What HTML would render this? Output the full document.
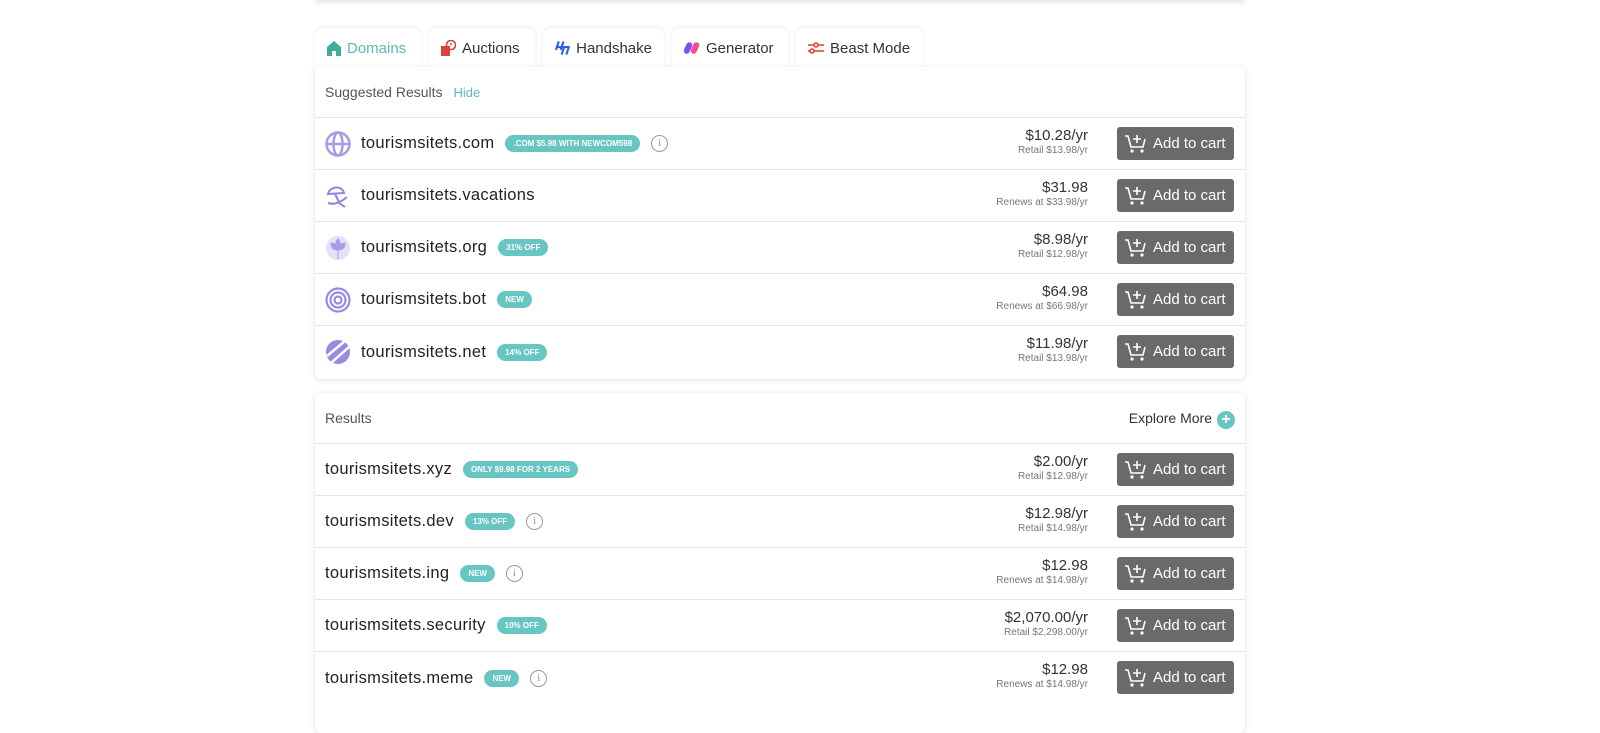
<!DOCTYPE html>
<html><head><style>
*{box-sizing:border-box;margin:0;padding:0}
body{width:1600px;height:718px;background:#fff;font-family:"Liberation Sans",sans-serif;color:#333;position:relative;overflow:hidden}
.top{position:absolute;left:315px;top:-10px;width:930px;height:10px;box-shadow:0 2px 6px rgba(0,0,0,.12)}
.tabs{position:absolute;left:315px;top:28px;display:flex;gap:8px}
.tab{height:40px;background:#fff;border-radius:8px 8px 0 0;box-shadow:0 -1px 5px rgba(0,0,0,.08);display:flex;align-items:center;padding:0 12px;font-size:15px;color:#333;gap:6px;white-space:nowrap}
.tab.act{color:#5fb8b4}
.card{position:absolute;left:315px;width:930px;background:#fff;border-radius:0 6px 6px 6px;box-shadow:0 1px 6px rgba(0,0,0,.12)}
.hdr{height:51px;display:flex;align-items:center;padding:0 10px;font-size:14px;color:#555;border-bottom:1px solid #e5e5e5}
.hdr .hide{color:#5fb8b4;font-size:13px;margin-left:11px}
.row{height:52px;display:flex;align-items:center;padding:0 10px;border-bottom:1px solid #e5e5e5;position:relative}
.row:last-child{border-bottom:none}
.ic{width:26px;height:26px;margin-right:10px}
.dn{font-size:16.5px;color:#222;letter-spacing:.3px}
.badge{background:#67c6c2;color:#fff;font-size:8px;font-weight:bold;border-radius:9px;padding:4px 8px;margin-left:11px;text-transform:uppercase}
.info{width:17px;height:17px;border:1.3px solid #999;border-radius:50%;margin-left:11px;font-size:11px;color:#999;text-align:center;line-height:15px;font-family:"Liberation Serif",serif}
.pr{position:absolute;right:157px;text-align:right;top:9px}
.pr .a{font-size:15px;color:#333}
.pr .b{font-size:10px;color:#777;margin-top:1px}
.btn{position:absolute;left:802px;top:9px;width:117px;height:33px;background:#6a6a6a;border-radius:3px;color:#fff;font-size:15px;display:flex;align-items:center;padding-left:8px;gap:6px}
</style></head><body>
<svg width="0" height="0" style="position:absolute"><symbol id="cart" viewBox="0 0 22 20"><path d="M0 2h3l3 11h12l2-8" fill="none" stroke="#fff" stroke-width="1.6"/><path d="M12 1v8M8 5h8" stroke="#fff" stroke-width="1.6"/><circle cx="7" cy="17" r="1.6" fill="#fff"/><circle cx="17" cy="17" r="1.6" fill="#fff"/></symbol></svg>
<div class="top"></div>
<div class="tabs">
<div class="tab act" style="width:106px"><svg width="14" height="15" viewBox="0 0 14 15"><path d="M7 0L0 6v9h5v-5h4v5h5V6z" fill="#3dae9a"/></svg>Domains</div>
<div class="tab" style="width:106px"><svg width="15" height="16" viewBox="0 0 15 16"><rect x="0" y="6" width="9" height="10" fill="#d9433a"/><circle cx="10" cy="5" r="4.5" fill="none" stroke="#d9433a" stroke-width="1.6"/><path d="M10 3v2.5" stroke="#d9433a" stroke-width="1.4"/></svg>Auctions</div>
<div class="tab" style="width:121px"><svg width="16" height="16" viewBox="0 0 16 16"><path d="M4 1L1 10M9 1L6 10M10 6L7 15M15 6L12 15M2 7h12" stroke="#2f5fe0" stroke-width="2.2" fill="none"/></svg>Handshake</div>
<div class="tab" style="width:116px"><svg width="16" height="14" viewBox="0 0 16 14"><rect x="1" y="1" width="6" height="12" rx="3" transform="rotate(25 4 7)" fill="#7b4ff0"/><rect x="8" y="1" width="6" height="12" rx="3" transform="rotate(25 11 7)" fill="#f0508a"/></svg>Generator</div>
<div class="tab" style="width:127px"><svg width="16" height="14" viewBox="0 0 16 14"><path d="M0 4h6M10 4h6M0 10h2M6 10h10" stroke="#e63a2e" stroke-width="1.6"/><circle cx="8" cy="4" r="2" fill="none" stroke="#e63a2e" stroke-width="1.5"/><circle cx="4" cy="10" r="2" fill="none" stroke="#e63a2e" stroke-width="1.5"/></svg>Beast Mode</div>
</div>

<div class="card" style="top:67px;height:312px">
<div class="hdr">Suggested Results<span class="hide">Hide</span></div>
<div class="row"><svg class="ic" viewBox="0 0 26 26"><circle cx="13" cy="13" r="11.5" fill="none" stroke="#a49ce8" stroke-width="2.5"/><ellipse cx="13" cy="13" rx="4.5" ry="11.5" fill="none" stroke="#a49ce8" stroke-width="2.5"/><path d="M1.5 13h23" stroke="#a49ce8" stroke-width="2.5"/></svg><span class="dn">tourismsitets.com</span><span class="badge">.com $5.98 with NEWCOM598</span><span class="info">i</span>
<div class="pr"><div class="a">$10.28/yr</div><div class="b">Retail $13.98/yr</div></div><div class="btn"><svg width="22" height="20"><use href="#cart"/></svg><span>Add to cart</span></div></div>
<div class="row"><svg class="ic" viewBox="0 0 26 26"><path d="M3 11c2-8 14-9 16-1zM10 11l4 8M3 20c6 2 12 0 19-6M14 20l6 4" fill="none" stroke="#8f86e0" stroke-width="2"/></svg><span class="dn">tourismsitets.vacations</span>
<div class="pr"><div class="a">$31.98</div><div class="b">Renews at $33.98/yr</div></div><div class="btn"><svg width="22" height="20"><use href="#cart"/></svg><span>Add to cart</span></div></div>
<div class="row"><svg class="ic" viewBox="0 0 26 26"><circle cx="13" cy="13" r="12" fill="#e4e1fa"/><path d="M13 4c-3 3-3 6 0 9 3-3 3-6 0-9zM6 8c0 5 3 7 7 7 4 0 7-2 7-7-3 0-5 2-7 4-2-2-4-4-7-4zM13 15v9" fill="#a59de8" stroke="#a59de8"/></svg><span class="dn">tourismsitets.org</span><span class="badge">31% off</span>
<div class="pr"><div class="a">$8.98/yr</div><div class="b">Retail $12.98/yr</div></div><div class="btn"><svg width="22" height="20"><use href="#cart"/></svg><span>Add to cart</span></div></div>
<div class="row"><svg class="ic" viewBox="0 0 26 26"><circle cx="13" cy="13" r="11.5" fill="none" stroke="#948be3" stroke-width="2.2"/><circle cx="13" cy="13" r="7.5" fill="none" stroke="#948be3" stroke-width="2.2"/><circle cx="13" cy="13" r="3.5" fill="none" stroke="#948be3" stroke-width="2.2"/></svg><span class="dn">tourismsitets.bot</span><span class="badge">New</span>
<div class="pr"><div class="a">$64.98</div><div class="b">Renews at $66.98/yr</div></div><div class="btn"><svg width="22" height="20"><use href="#cart"/></svg><span>Add to cart</span></div></div>
<div class="row"><svg class="ic" viewBox="0 0 26 26"><circle cx="13" cy="13" r="12" fill="#948be3"/><path d="M2 17L20 2M6 24L24 8" stroke="#fff" stroke-width="2.5"/></svg><span class="dn">tourismsitets.net</span><span class="badge">14% off</span>
<div class="pr"><div class="a">$11.98/yr</div><div class="b">Retail $13.98/yr</div></div><div class="btn"><svg width="22" height="20"><use href="#cart"/></svg><span>Add to cart</span></div></div>
</div>

<div class="card" style="top:393px;height:340px;border-radius:6px">
<div class="hdr" style="justify-content:space-between">Results<span style="color:#333;font-size:14px;display:flex;align-items:center;gap:5px">Explore More<span style="width:18px;height:18px;border-radius:50%;background:#67c6c2;color:#fff;text-align:center;line-height:18px;font-size:16px;font-weight:bold;margin-top:4px">+</span></span></div>
<div class="row"><span class="dn">tourismsitets.xyz</span><span class="badge">Only $9.98 for 2 years</span>
<div class="pr"><div class="a">$2.00/yr</div><div class="b">Retail $12.98/yr</div></div><div class="btn"><svg width="22" height="20"><use href="#cart"/></svg><span>Add to cart</span></div></div>
<div class="row"><span class="dn">tourismsitets.dev</span><span class="badge">13% off</span><span class="info">i</span>
<div class="pr"><div class="a">$12.98/yr</div><div class="b">Retail $14.98/yr</div></div><div class="btn"><svg width="22" height="20"><use href="#cart"/></svg><span>Add to cart</span></div></div>
<div class="row"><span class="dn">tourismsitets.ing</span><span class="badge">New</span><span class="info">i</span>
<div class="pr"><div class="a">$12.98</div><div class="b">Renews at $14.98/yr</div></div><div class="btn"><svg width="22" height="20"><use href="#cart"/></svg><span>Add to cart</span></div></div>
<div class="row"><span class="dn">tourismsitets.security</span><span class="badge">10% off</span>
<div class="pr"><div class="a">$2,070.00/yr</div><div class="b">Retail $2,298.00/yr</div></div><div class="btn"><svg width="22" height="20"><use href="#cart"/></svg><span>Add to cart</span></div></div>
<div class="row"><span class="dn">tourismsitets.meme</span><span class="badge">New</span><span class="info">i</span>
<div class="pr"><div class="a">$12.98</div><div class="b">Renews at $14.98/yr</div></div><div class="btn"><svg width="22" height="20"><use href="#cart"/></svg><span>Add to cart</span></div></div>
</div>
</body></html>
